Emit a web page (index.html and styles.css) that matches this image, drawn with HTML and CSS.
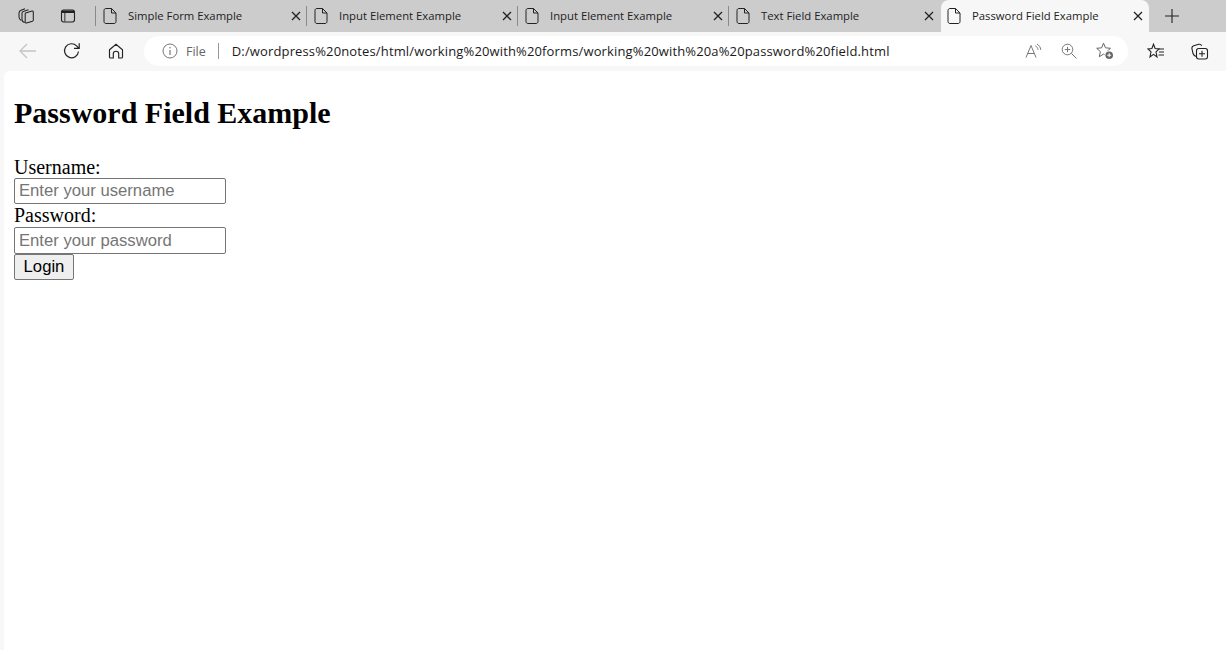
FILE: index.html
```html
<!DOCTYPE html>
<html lang="en">
<head>
<meta charset="utf-8">
<title>Password Field Example</title>
<link rel="stylesheet" href="styles.css">
</head>
<body>
<div class="tabstrip">
  <div class="strip-tools">
    <svg class="ic" width="18" height="18" viewBox="0 0 18 18"><g fill="none" stroke="#222" stroke-width="1.050"><path d="M8.700 6L15 4.100c.8-.2 1.300.2 1.300 1V13c0 .6-.3 1-.9 1.200L9.500 16c-.8.2-1.300-.2-1.300-1V7c0-.5.1-.8.5-1z"/><path d="M7.700 15.400C6 15 5 14 5 12.500V6.200c0-1 .5-1.600 1.300-1.800l5.200-1.600"/><path d="M4.300 13.500C3 12.700 2 11.500 2 10V6.100c0-1.500.7-2.400 2-2.900l4-1.500"/></g></svg>
    <svg class="ic" width="16" height="16" viewBox="0 0 16 16"><rect x="1.500" y="2" width="13" height="12" rx="2.200" fill="none" stroke="#222" stroke-width="1.100"/><path d="M2 2.500h12v2.600H5.300v8.500h-.9V5.100H2z" fill="#222"/></svg>
  </div>
  <div class="tab">
    <svg class="doc" width="14" height="16" viewBox="0 0 14 16"><path d="M3 .5h5.500L13 5v8.500c0 1.200-.8 2-2 2H3c-1.200 0-2-.8-2-2v-11c0-1.200.8-2 2-2zM8.500.5V5H13" fill="none" stroke="#222" stroke-width="1"/></svg>
    <span class="tab-title">Simple Form Example</span>
    <svg class="close" width="10" height="10" viewBox="0 0 10 10"><path d="M1 1l8 8M9 1l-8 8" stroke="#222" stroke-width="1.300"/></svg>
  </div>
  <div class="tab">
    <svg class="doc" width="14" height="16" viewBox="0 0 14 16"><path d="M3 .5h5.500L13 5v8.500c0 1.200-.8 2-2 2H3c-1.200 0-2-.8-2-2v-11c0-1.200.8-2 2-2zM8.500.5V5H13" fill="none" stroke="#222" stroke-width="1"/></svg>
    <span class="tab-title">Input Element Example</span>
    <svg class="close" width="10" height="10" viewBox="0 0 10 10"><path d="M1 1l8 8M9 1l-8 8" stroke="#222" stroke-width="1.300"/></svg>
  </div>
  <div class="tab">
    <svg class="doc" width="14" height="16" viewBox="0 0 14 16"><path d="M3 .5h5.500L13 5v8.500c0 1.200-.8 2-2 2H3c-1.200 0-2-.8-2-2v-11c0-1.200.8-2 2-2zM8.500.5V5H13" fill="none" stroke="#222" stroke-width="1"/></svg>
    <span class="tab-title">Input Element Example</span>
    <svg class="close" width="10" height="10" viewBox="0 0 10 10"><path d="M1 1l8 8M9 1l-8 8" stroke="#222" stroke-width="1.300"/></svg>
  </div>
  <div class="tab">
    <svg class="doc" width="14" height="16" viewBox="0 0 14 16"><path d="M3 .5h5.500L13 5v8.500c0 1.200-.8 2-2 2H3c-1.200 0-2-.8-2-2v-11c0-1.200.8-2 2-2zM8.500.5V5H13" fill="none" stroke="#222" stroke-width="1"/></svg>
    <span class="tab-title">Text Field Example</span>
    <svg class="close" width="10" height="10" viewBox="0 0 10 10"><path d="M1 1l8 8M9 1l-8 8" stroke="#222" stroke-width="1.300"/></svg>
  </div>
  <div class="tab tab-active">
    <svg class="doc" width="14" height="16" viewBox="0 0 14 16"><path d="M3 .5h5.500L13 5v8.500c0 1.200-.8 2-2 2H3c-1.200 0-2-.8-2-2v-11c0-1.200.8-2 2-2zM8.500.5V5H13" fill="none" stroke="#222" stroke-width="1"/></svg>
    <span class="tab-title">Password Field Example</span>
    <svg class="close" width="10" height="10" viewBox="0 0 10 10"><path d="M1 1l8 8M9 1l-8 8" stroke="#222" stroke-width="1.300"/></svg>
  </div>
  <svg class="newtab" width="16" height="16" viewBox="0 0 16 16"><path d="M8 1v14M1 8h14" stroke="#222" stroke-width="1.100"/></svg>
</div>
<div class="toolbar">
  <svg class="back" width="20" height="18" viewBox="0 0 20 18"><path d="M2 9h16M9 2L2 9l7 7" fill="none" stroke="#c4c4c4" stroke-width="1.300"/></svg>
  <svg class="reload" width="18" height="18" viewBox="0 0 18 18"><path d="M15.500 9.500A7 7 0 1 1 13.600 3.900L16 6.300M16.200 1.200v5.200H11" fill="none" stroke="#222" stroke-width="1.200"/></svg>
  <svg class="home" width="16" height="16" viewBox="0 0 16 16"><path d="M1.500 6.800L8 1.200l6.500 5.600V14c0 .6-.4 1-1 1h-2.800v-4.200c0-1.500-1.100-2.600-2.700-2.600s-2.700 1.100-2.700 2.600V15H2.500c-.6 0-1-.4-1-1z" fill="none" stroke="#222" stroke-width="1.150"/></svg>
  <div class="omnibox">
    <svg class="info" width="16" height="16" viewBox="0 0 16 16"><circle cx="8" cy="8" r="7" fill="none" stroke="#767676" stroke-width="1"/><path d="M8 7v5" stroke="#767676" stroke-width="1.200"/><circle cx="8" cy="4.800" r=".8" fill="#767676"/></svg>
    <span class="scheme">File</span>
    <span class="divider"></span>
    <span class="url">D:/wordpress%20notes/html/working%20with%20forms/working%20with%20a%20password%20field.html</span>
    <div class="omni-actions">
      <svg width="17" height="16" viewBox="0 0 17 16"><path d="M1 14.500L6 2.500l5 12M2.800 10.500h6.400" fill="none" stroke="#777" stroke-width="1"/><path d="M10.300 2.800c1.500.9 2.500 2.300 2.800 4M12 1c2.200 1.300 3.500 3.300 3.800 5.800" fill="none" stroke="#777" stroke-width="1"/></svg>
      <svg width="16" height="16" viewBox="0 0 16 16"><circle cx="6.500" cy="6.500" r="5.300" fill="none" stroke="#777" stroke-width="1"/><path d="M10.400 10.400l5 5M6.500 3.800v5.400M3.800 6.500h5.400" fill="none" stroke="#777" stroke-width="1"/></svg>
      <svg width="18" height="18" viewBox="0 0 18 18"><path d="M7.500 1.200l2 4.600 5 .5-3.800 3.400 1.100 5-4.300-2.600-4.200 2.600 1.100-5L.7 6.300l5-.5z" fill="none" stroke="#666" stroke-width="1"/><circle cx="13.200" cy="13.200" r="4.800" fill="#fff"/><circle cx="13.200" cy="13.200" r="3.800" fill="#666"/><path d="M13.200 11.200v4M11.200 13.200h4" stroke="#fff" stroke-width="1"/></svg>
    </div>
  </div>
  <svg class="fav" width="18" height="16" viewBox="0 0 18 16"><path d="M6.500 1.200l1.600 4.300 3.900.4-3 3 1 5-3.500-2.500L3 13.900l1-5-3-3 3.900-.4z" fill="none" stroke="#222" stroke-width="1.100"/><path d="M11.500 6h5.500M12 9h5M11.500 12h5.500" stroke="#222" stroke-width="1"/></svg>
  <svg class="coll" width="18" height="17" viewBox="0 0 18 17"><path d="M5 13.500c-1.500-.6-2.500-1.500-3-3L1 6c-.4-1.600.3-2.700 1.700-3.200l5-1.500c1.300-.3 2.400.2 3 1.500" fill="none" stroke="#222" stroke-width="1.100"/><rect x="5.500" y="5.500" width="11" height="10.500" rx="2.200" fill="none" stroke="#222" stroke-width="1.100"/><path d="M11 7.800v6M8 10.800h6" stroke="#222" stroke-width="1.100"/></svg>
</div>
<main class="page">
  <h1 class="title">Password Field Example</h1>
  <form class="login">
    <label class="lbl" for="u">Username:</label><br>
    <input class="field" id="u" type="text" placeholder="Enter your username"><br>
    <label class="lbl lbl-next" for="p">Password:</label><br>
    <input class="field field-tall" id="p" type="password" placeholder="Enter your password"><br>
    <button class="submit" type="button">Login</button>
  </form>
</main>
</body>
</html>
```

FILE: styles.css
```css
* { box-sizing: border-box; }
html, body { margin: 0; height: 100%; overflow: hidden; }
body {
  background: #f7f7f7;
  display: flex;
  flex-direction: column;
  height: 650px;
}
svg { display: block; flex: none; }

.tabstrip {
  height: 32px;
  background: #cccccc;
  display: flex;
  align-items: stretch;
  font-family: "Open Sans", "Noto Sans", sans-serif;
  font-size: 11.3px;
  color: #222;
}
.strip-tools {
  width: 96px;
  display: flex;
  align-items: center;
  gap: 25px;
  padding-left: 17px;
}
.tab {
  width: 211px;
  height: 32px;
  display: flex;
  align-items: center;
  padding-left: 7px;
  position: relative;
}
.tab::before {
  content: "";
  position: absolute;
  left: -1px;
  top: 6px;
  height: 20px;
  width: 1px;
  background: #8a8a8a;
}
.tab-title { margin: -2px 0 0 11px; flex: 1; white-space: nowrap; }
.close { margin-right: 6px; }
.tab-active {
  margin-left: 1px;
  width: 208px;
  background: #f7f7f7;
  border-radius: 8px 8px 0 0;
  padding-left: 6px;
}
.tab-active::before { display: none; }
.newtab { margin: 8px 0 0 15px; }

.toolbar {
  height: 38px;
  display: flex;
  align-items: center;
  padding-left: 18px;
}
.back { margin-right: 25px; }
.reload { margin-right: 27px; }
.home { margin-right: 20px; }
.omnibox {
  width: 984px;
  height: 30px;
  background: #fff;
  border-radius: 15px;
  display: flex;
  align-items: center;
  padding-left: 18px;
  font-family: "Open Sans", "Noto Sans", sans-serif;
  font-size: 13px;
}
.scheme { margin-left: 8px; color: #666; font-size: 12.5px; }
.divider { width: 1px; height: 16px; background: #999; margin: 0 13px 0 12px; }
.url { color: #1a1a1a; white-space: nowrap; letter-spacing: 0.14px; }
.omni-actions {
  margin-left: auto;
  display: flex;
  align-items: center;
  gap: 19px;
  padding-right: 14px;
}
.fav { margin-left: 19px; }
.coll { margin-left: 26px; }

.page {
  flex: 1;
  margin: 1px 0 0 4px;
  background: #fff;
  border-radius: 6px 0 0 0;
  padding: 10px 10px 0;
  color: #000;
  font-family: "Liberation Serif", "Times New Roman", serif;
  font-size: 20px;
}
.title {
  font-size: 30px;
  font-weight: bold;
  margin: 15px 0 27px;
  line-height: 33px;
}
.login { line-height: 22px; }
.lbl { display: inline-block; height: 22px; line-height: 22px; }
.lbl-next { height: 23px; line-height: 22px; }
.field {
  width: 212px;
  height: 26px;
  padding: 1px 4px;
  border: 1px solid #767676;
  border-radius: 2px;
  font-family: "Liberation Sans", Arial, sans-serif;
  font-size: 16.67px;
  background: #fff;
  vertical-align: top;
  margin: 0;
}
.field-tall { height: 27px; }
.field::placeholder { color: #757575; opacity: 1; }
.submit {
  height: 26px;
  width: 60px;
  padding: 0;
  border: 1px solid #767676;
  border-radius: 2px;
  background: #efefef;
  color: #000;
  font-family: "Liberation Sans", Arial, sans-serif;
  font-size: 16.67px;
  vertical-align: top;
  margin: 0;
}
```
